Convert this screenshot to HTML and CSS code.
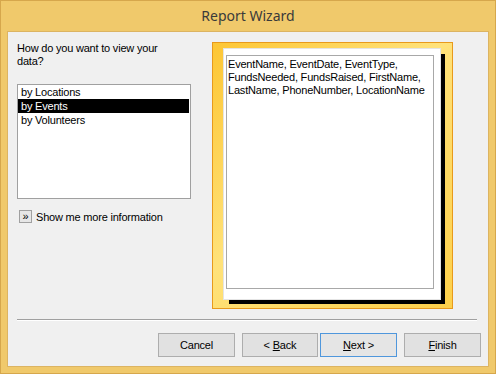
FILE: index.html
```html
<!DOCTYPE html>
<html lang="en">
<head>
    <meta charset="UTF-8">
    <title>Report Wizard</title>
    <link rel="stylesheet" href="styles.css">
</head>
<body>
    <div class="window">
        <div class="titlebar">Report Wizard</div>
        <div class="client">
            <div class="main">
                <div class="left">
                    <div class="question">How do you want to view your data?</div>
                    <ul class="listbox">
                        <li>by Locations</li>
                        <li class="selected">by Events</li>
                        <li>by Volunteers</li>
                    </ul>
                    <div class="more">
                        <span class="more-btn">&raquo;</span>
                        <span>Show me more information</span>
                    </div>
                </div>
                <div class="preview">
                    <div class="page">
                        <div class="fields">EventName, EventDate, EventType, FundsNeeded, FundsRaised, FirstName, LastName, PhoneNumber, LocationName</div>
                    </div>
                </div>
            </div>
            <div class="separator"></div>
            <div class="buttons">
                <button class="btn">Cancel</button>
                <button class="btn back">&lt; <u>B</u>ack</button>
                <button class="btn next"><u>N</u>ext &gt;</button>
                <button class="btn finish"><u>F</u>inish</button>
            </div>
        </div>
    </div>
</body>
</html>
```

FILE: styles.css
```css
body {
    margin: 0;
    padding: 0;
    font-family: "Liberation Sans", Arial, sans-serif;
    font-size: 11px;
    letter-spacing: -0.2px;
    color: #000;
}

.window {
    width: 496px;
    height: 374px;
    box-sizing: border-box;
    border: 1px solid #d6a74c;
    background: #f0c96b;
}

.titlebar {
    height: 30px;
    line-height: 30px;
    text-align: center;
    font-family: "Noto Sans", sans-serif;
    font-size: 14px;
    letter-spacing: 0;
    color: #3a3a3a;
}

.client {
    margin: 0 6px;
    height: 336px;
    box-sizing: border-box;
    border: 1px solid #dcb462;
    background: #f0f0f0;
}

.main {
    display: flex;
    height: 287px;
}

.left {
    width: 174px;
    margin-left: 9px;
    padding-top: 10px;
}

.question {
    line-height: 13px;
    padding-right: 20px;
}

.listbox {
    list-style: none;
    margin: 16px 0 0 0;
    padding: 0;
    height: 115px;
    box-sizing: border-box;
    border: 1px solid #a0a0a0;
    background: #fff;
}

.listbox li {
    height: 14px;
    line-height: 14px;
    padding-left: 3px;
    margin-right: 1px;
}

.listbox li.selected {
    background: #000;
    color: #fff;
}

.more {
    display: flex;
    align-items: center;
    gap: 4px;
    margin-top: 11px;
    margin-left: 2px;
}

.more-btn {
    width: 11px;
    height: 11px;
    border: 1px solid #a0a0a0;
    background: #e6e6e6;
    font-size: 11px;
    line-height: 10px;
    letter-spacing: 0;
    text-align: center;
}

.preview {
    margin-left: 21px;
    margin-top: 10px;
    width: 241px;
    height: 267px;
    box-sizing: border-box;
    border: 1px solid #e89a1c;
    background: linear-gradient(135deg, #fdc634 0%, #ffe27a 45%, #fdd04a 100%);
    padding: 5px 0 0 10px;
}

.page {
    width: 218px;
    height: 252px;
    box-sizing: border-box;
    background: #fff;
    border: 1px solid #e4e4e4;
    box-shadow: 5px 5px 0 -1px #000;
    padding: 6px 0 0 2px;
}

.fields {
    width: 208px;
    height: 234px;
    box-sizing: border-box;
    border: 1px solid #a8a8a8;
    padding: 2px 4px 0 1px;
    line-height: 13px;
}

.separator {
    margin: 0 11px 0 9px;
    height: 1px;
    background: #a0a0a0;
    border-bottom: 1px solid #fff;
}

.buttons {
    display: flex;
    justify-content: flex-end;
    margin-top: 12px;
    padding-right: 7px;
}

.btn {
    width: 77px;
    height: 24px;
    margin-left: 7px;
    padding: 0;
    border: 1px solid #adadad;
    background: #e1e1e1;
    font-family: "Liberation Sans", Arial, sans-serif;
    font-size: 11px;
    letter-spacing: -0.2px;
    color: #000;
}

.btn.back {
    width: 76px;
}

.btn.next {
    margin-left: 2px;
    border-color: #4f97dc;
    background: #e5e5e5;
}
```
